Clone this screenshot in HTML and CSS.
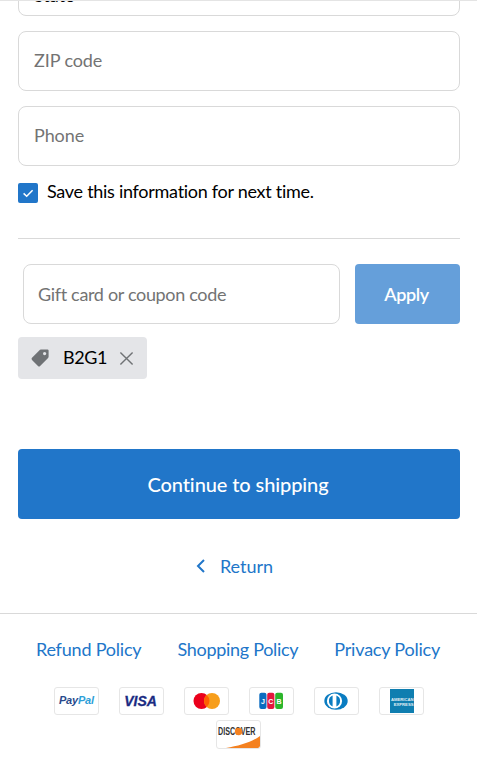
FILE: index.html
```html
<!DOCTYPE html>
<html lang="en">
<head>
<meta charset="utf-8">
<title>Checkout</title>
<link rel="stylesheet" href="styles.css">
</head>
<body>
<main class="page">
  <form class="checkout">
    <label class="field field-state"><span class="value">State</span></label>
    <label class="field"><span class="placeholder">ZIP code</span></label>
    <label class="field"><span class="placeholder">Phone</span></label>
    <label class="save">
      <span class="checkbox">
        <svg viewBox="0 0 20 20" width="20" height="20" aria-hidden="true"><path d="M5.6 10.4 8.7 13.3 14.6 7.2" fill="none" stroke="#fff" stroke-width="1.5"/></svg>
      </span>
      <span class="save-text">Save this information for next time.</span>
    </label>
    <hr class="rule">
    <div class="coupon">
      <label class="field coupon-input"><span class="placeholder coupon-text">Gift card or coupon code</span></label>
      <button class="apply" type="button">Apply</button>
    </div>
    <div class="tag">
      <svg class="tag-icon" viewBox="0 0 20 20" width="20" height="20" aria-hidden="true"><path fill="#6f7275" d="M11.6 1.6h6a1.2 1.2 0 0 1 1 1v6.2a1.6 1.6 0 0 1-.5 1.1l-8 8a1.5 1.5 0 0 1-2.1 0l-6-6a1.5 1.5 0 0 1 0-2.1l8-8a2 2 0 0 1 1.6-.2Z"/><circle cx="14.6" cy="5.6" r="1.6" fill="#e4e5e8"/></svg>
      <span class="tag-text">B2G1</span>
      <svg class="tag-x" viewBox="0 0 16 16" width="16" height="16" aria-hidden="true"><path d="M1.5 1.5 14.5 14.5M14.5 1.5 1.5 14.5" stroke="#6f7275" stroke-width="1.5" fill="none"/></svg>
    </div>
    <button class="continue" type="button">Continue to shipping</button>
    <a class="return" href="#">
      <svg viewBox="0 0 10 16" width="10" height="16" aria-hidden="true"><path d="M8 2 2 8 8 14" fill="none" stroke="#2176c9" stroke-width="2"/></svg>
      <span>Return</span>
    </a>
  </form>
  <footer class="footer">
    <nav class="links">
      <a href="#">Refund Policy</a>
      <a class="link-tight" href="#">Shopping Policy</a>
      <a href="#">Privacy Policy</a>
    </nav>
    <ul class="cards">
      <li class="card">
        <svg viewBox="0 0 43 26" aria-hidden="true"><text x="21.5" y="16" text-anchor="middle" class="t-paypal" textLength="35"><tspan fill="#2a4a8c">Pay</tspan><tspan fill="#2ea0d8">Pal</tspan></text></svg>
      </li>
      <li class="card">
        <svg viewBox="0 0 43 26" aria-hidden="true"><text x="20.5" y="18" text-anchor="middle" class="t-visa">VISA</text></svg>
      </li>
      <li class="card">
        <svg viewBox="0 0 43 26" aria-hidden="true"><circle cx="16.5" cy="13" r="8" fill="#eb001b"/><circle cx="27" cy="13" r="8" fill="#f79e1b"/><path d="M21.75 7a8 8 0 0 1 0 12 8 8 0 0 1 0-12Z" fill="#ff5f00"/></svg>
      </li>
      <li class="card">
        <svg viewBox="0 0 43 26" aria-hidden="true"><rect x="9.3" y="4.7" width="7.2" height="16.3" rx="2" fill="#0b6cc0"/><rect x="17.2" y="4.7" width="7.2" height="16.3" rx="2" fill="#e3173e"/><rect x="25.2" y="4.7" width="7.8" height="16.3" rx="2" fill="#2cb52c"/><text x="13" y="16" class="t-jcb">J</text><text x="20.8" y="16" class="t-jcb">C</text><text x="29" y="16" class="t-jcb">B</text></svg>
      </li>
      <li class="card">
        <svg viewBox="0 0 43 26" aria-hidden="true"><ellipse cx="21" cy="13" rx="11.7" ry="8.7" fill="#0a7cc1"/><circle cx="19.5" cy="13" r="7.6" fill="#fff"/><path d="M17.6 7.6v10.8a5.8 5.8 0 0 1 0-10.8ZM21.4 7.6a5.8 5.8 0 0 1 0 10.8Z" fill="#0a7cc1"/></svg>
      </li>
      <li class="card">
        <svg viewBox="0 0 43 26" aria-hidden="true"><rect x="10" y="1" width="24" height="24" fill="#0f7eb0"/><text x="11" y="13" class="t-amex">AMERICAN</text><text x="33.5" y="18" text-anchor="end" class="t-amex">EXPRESS</text></svg>
      </li>
      <li class="card">
        <svg viewBox="0 0 43 27" aria-hidden="true"><path d="M9 27C22 25 35 21 43 15v10a2 2 0 0 1-2 2Z" fill="#f48120"/><text transform="translate(1 14) scale(1 1.4)" class="t-discover">DISCOVER</text><circle cx="21.6" cy="10.5" r="3.7" fill="#f48120"/></svg>
      </li>
    </ul>
  </footer>
</main>
</body>
</html>
```
FILE: styles.css
```css
* { box-sizing: border-box; }

html, body {
  margin: 0;
  padding: 0;
  background: #fff;
}

body {
  font-family: Lato, "Noto Sans", sans-serif;
  color: #000;
  height: 783px;
  overflow: hidden;
  border-top: 1px solid #e4e4e4;
}

.page {
  width: 477px;
}

.checkout {
  display: flex;
  flex-direction: column;
  padding: 0 17px 0 18px;
}

.field {
  display: flex;
  align-items: center;
  height: 60px;
  padding: 0 15px 2px;
  background: #fff;
  border: 1px solid #d9d9d9;
  border-radius: 8px;
  font-size: 18px;
}

.field + .field {
  margin-top: 15px;
}

.field-state {
  margin-top: -45px;
  align-items: flex-end;
  padding-bottom: 9px;
}

.placeholder {
  color: #737373;
  letter-spacing: -0.1px;
}

.save {
  display: flex;
  align-items: flex-start;
  gap: 9px;
  margin-top: 17px;
  font-size: 18px;
}

.save-text {
  line-height: 16px;
  letter-spacing: -0.28px;
}

.checkbox {
  display: block;
  width: 20px;
  height: 20px;
  border-radius: 2px;
  background: #2176c9;
}

.checkbox svg {
  display: block;
}

.rule {
  width: 100%;
  height: 1px;
  margin: 35px 0 0;
  border: 0;
  background: #d9d9d9;
}

.coupon {
  display: flex;
  gap: 15px;
  margin-top: 25px;
  padding-left: 5px;
}

.coupon-input {
  flex: 1;
  padding: 0 14px;
}

.coupon-text {
  letter-spacing: -0.33px;
}

.apply {
  width: 105px;
  height: 60px;
  padding: 0 2px 0 0;
  border: 0;
  border-radius: 4px;
  background: #659fda;
  color: #fff;
  font: 600 18px Lato, sans-serif;
  letter-spacing: -0.4px;
}

.tag {
  display: flex;
  align-items: center;
  align-self: flex-start;
  width: 129px;
  height: 42px;
  margin-top: 13px;
  padding-left: 12px;
  border-radius: 4px;
  background: #e4e5e8;
  font-size: 18px;
}

.tag-text {
  margin-bottom: 2px;
  letter-spacing: -0.4px;
}

.tag-icon {
  margin-right: 13px;
}

.tag-x {
  margin-left: 12px;
  width: 15px;
  height: 15px;
}

.continue {
  height: 70px;
  margin-top: 70px;
  padding-right: 8px;
  border: 0;
  border-radius: 4px;
  background: #2176c9;
  color: #fff;
  font: 500 20px Lato, sans-serif;
  letter-spacing: -0.1px;
}

.return {
  display: flex;
  align-items: center;
  justify-content: center;
  gap: 14px;
  height: 28px;
  margin-top: 33px;
  padding-right: 9px;
  color: #2176c9;
  font-size: 18px;
  text-decoration: none;
}

.footer {
  margin-top: 33px;
  border-top: 1px solid #d9d9d9;
}

.links {
  display: flex;
  justify-content: center;
  gap: 36px;
  margin-top: 23px;
  padding-right: 1px;
  font-size: 18px;
  line-height: 24px;
  letter-spacing: -0.2px;
}

.links a {
  color: #2176c9;
  text-decoration: none;
}

.links .link-tight {
  letter-spacing: -0.3px;
}

.cards {
  display: flex;
  flex-wrap: wrap;
  justify-content: center;
  gap: 5px 20px;
  margin: 26px 0 0;
  padding: 0 30px;
  list-style: none;
}

.card {
  width: 45px;
  height: 28px;
  border: 1px solid #e6e6e6;
  border-radius: 3px;
  background: #fff;
  overflow: hidden;
}

.card:last-child {
  height: 29px;
}

.card svg {
  display: block;
  width: 100%;
  height: 100%;
}

.t-paypal {
  font: italic 700 11px "Liberation Sans", sans-serif;
}

.t-visa {
  font: italic 700 14px "Liberation Sans", sans-serif;
  fill: #1a2b82;
  stroke: #1a2b82;
  stroke-width: 0.3px;
}

.t-jcb {
  font: 700 7px "Liberation Sans", sans-serif;
  fill: #fff;
  text-anchor: middle;
}

.t-amex {
  font: 700 4.2px "Liberation Sans", sans-serif;
  fill: #e2eff5;
}

.t-discover {
  font: 700 7.2px "Liberation Sans", sans-serif;
  fill: #333;
}
```
